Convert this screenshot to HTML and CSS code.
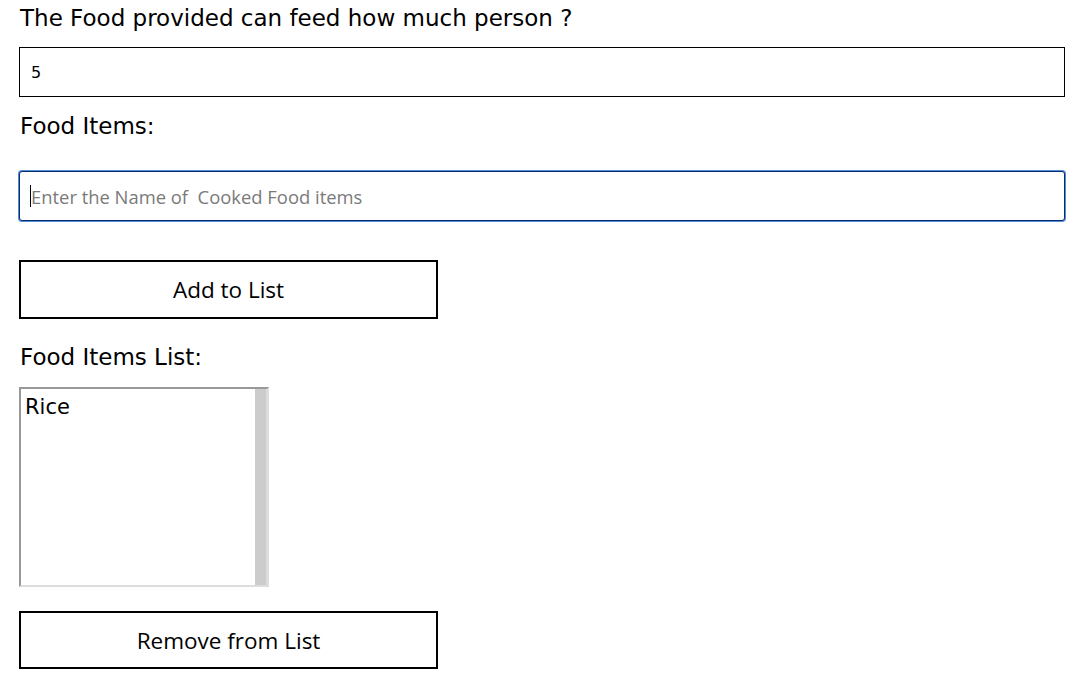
FILE: index.html
```html
<!DOCTYPE html>
<html>
<head>
<meta charset="utf-8">
<link rel="stylesheet" href="styles.css">
</head>
<body>
<form class="form">
  <label class="label label-first" for="count">The Food provided can feed how much person ?</label>
  <input class="field field-count" id="count" type="text" value="5">
  <label class="label label-items" for="item">Food Items:</label>
  <div class="field-wrap">
    <input class="field field-item" id="item" type="text" placeholder="Enter the Name of  Cooked Food items">
    <span class="caret"></span>
  </div>
  <button class="btn btn-add" type="button">Add to List</button>
  <div class="label label-list">Food Items List:</div>
  <div class="listbox">
    <div class="listbox-items">
      <div class="listbox-item">Rice</div>
    </div>
    <div class="listbox-scroll"></div>
  </div>
  <button class="btn btn-remove" type="button">Remove from List</button>
</form>
</body>
</html>
```

FILE: styles.css
```css
html, body {
  margin: 0;
  padding: 0;
  background: #ffffff;
}

.form {
  display: flex;
  flex-direction: column;
  align-items: flex-start;
  padding: 5px 0 0 19px;
  font-family: "DejaVu Sans", Verdana, sans-serif;
  color: #000;
}

.label {
  display: block;
  font-size: 23px;
  line-height: 27px;
  padding-left: 1px;
}

.label-items {
  margin-top: 16px;
}

.label-list {
  margin-top: 25px;
}

.field {
  box-sizing: border-box;
  width: 1046px;
  height: 50px;
  margin: 0;
  border: 1px solid #000;
  background: #fff;
  padding: 0 11px;
  font-family: "DejaVu Sans", Verdana, sans-serif;
  font-size: 16px;
  color: #000;
  outline: none;
}

.field-count {
  margin-top: 15px;
}

.field-wrap {
  position: relative;
  margin-top: 31px;
}

.field-item {
  display: block;
  border: 1px solid #0d2b6b;
  border-radius: 3px;
  box-shadow: 0 0 0 1px #4c8fd6;
  font-family: "Open Sans", "Noto Sans", sans-serif;
  font-size: 18.4px;
}

.field-item::placeholder {
  color: #7a7a7a;
  font-family: "Open Sans", "Noto Sans", sans-serif;
}

.caret {
  position: absolute;
  left: 11px;
  top: 14px;
  width: 1px;
  height: 22px;
  background: #000;
}

.btn {
  box-sizing: border-box;
  width: 419px;
  border: 2px solid #000;
  background: #fff;
  color: #000;
  font-family: "Open Sans", "Noto Sans", sans-serif;
  font-size: 22.5px;
  padding: 0;
  margin: 0;
}

.btn-add {
  height: 59px;
  margin-top: 39px;
}

.btn-remove {
  height: 58px;
  margin-top: 24px;
}

.listbox {
  box-sizing: border-box;
  display: flex;
  width: 250px;
  height: 200px;
  margin-top: 16px;
  border-top: 2px solid #999;
  border-left: 2px solid #999;
  border-right: 2px solid #ddd;
  border-bottom: 2px solid #ddd;
  background: #fff;
}

.listbox-items {
  flex: 1;
  padding: 6px 0 0 4px;
}

.listbox-item {
  font-family: "DejaVu Sans", Verdana, sans-serif;
  font-size: 21px;
  line-height: 25px;
}

.listbox-scroll {
  width: 11px;
  background: #cccccc;
  border-right: 1px solid #dcdcdc;
}
```
